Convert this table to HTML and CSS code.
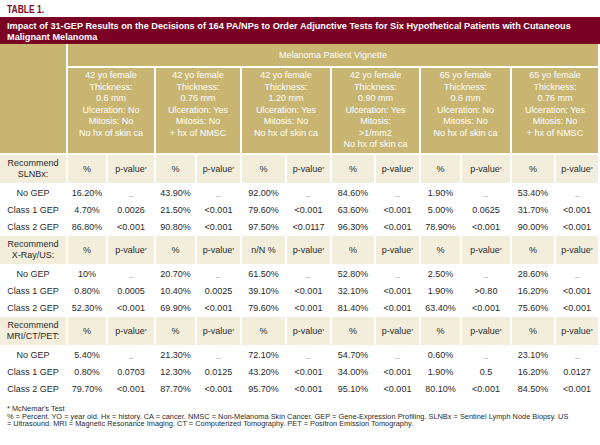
FILE: index.html
```html
<!DOCTYPE html>
<html>
<head>
<meta charset="utf-8">
<link rel="stylesheet" href="styles.css">
</head>
<body>
<div class="page">
  <div class="label"><span class="label-text">TABLE 1.</span></div>
  <div class="caption">Impact of 31-GEP Results on the Decisions of 164 PA/NPs to Order Adjunctive Tests for Six Hypothetical Patients with Cutaneous<br>Malignant Melanoma</div>
  <div class="grid">
    <div class="tan corner"></div>
    <div class="tan vignette">Melanoma Patient Vignette</div>
    <div class="tan case">42 yo female<br>Thickness:<br>0.6 mm<br>Ulceration: No<br>Mitosis: No<br>No hx of skin ca</div>
    <div class="tan case">42 yo female<br>Thickness:<br>0.76 mm<br>Ulceration: Yes<br>Mitosis: No<br>+ hx of NMSC</div>
    <div class="tan case">42 yo female<br>Thickness:<br>1.20 mm<br>Ulceration: Yes<br>Mitosis: No<br>No hx of skin ca</div>
    <div class="tan case">42 yo female<br>Thickness:<br>0.90 mm<br>Ulceration: Yes<br>Mitosis:<br>&gt;1/mm2<br>No hx of skin ca</div>
    <div class="tan case">65 yo female<br>Thickness:<br>0.6 mm<br>Ulceration: No<br>Mitosis: No<br>No hx of skin ca</div>
    <div class="tan case">65 yo female<br>Thickness:<br>0.76 mm<br>Ulceration: Yes<br>Mitosis: No<br>+ hx of NMSC</div>

    <div class="hd">Recommend<br>SLNBx:</div>
    <div class="hd">%</div><div class="hd">p-value<sup>*</sup></div>
    <div class="hd">%</div><div class="hd">p-value<sup>*</sup></div>
    <div class="hd">%</div><div class="hd">p-value<sup>*</sup></div>
    <div class="hd">%</div><div class="hd">p-value<sup>*</sup></div>
    <div class="hd">%</div><div class="hd">p-value<sup>*</sup></div>
    <div class="hd">%</div><div class="hd">p-value<sup>*</sup></div>

    <div class="dt">No GEP</div><div class="dt">16.20%</div><div class="dt dash">_</div><div class="dt">43.90%</div><div class="dt dash">_</div><div class="dt">92.00%</div><div class="dt dash">_</div><div class="dt">84.60%</div><div class="dt dash">_</div><div class="dt">1.90%</div><div class="dt dash">_</div><div class="dt">53.40%</div><div class="dt dash">_</div>
    <div class="dt">Class 1 GEP</div><div class="dt">4.70%</div><div class="dt">0.0026</div><div class="dt">21.50%</div><div class="dt">&lt;0.001</div><div class="dt">79.60%</div><div class="dt">&lt;0.001</div><div class="dt">63.60%</div><div class="dt">&lt;0.001</div><div class="dt">5.00%</div><div class="dt">0.0625</div><div class="dt">31.70%</div><div class="dt">&lt;0.001</div>
    <div class="dt">Class 2 GEP</div><div class="dt">86.80%</div><div class="dt">&lt;0.001</div><div class="dt">90.80%</div><div class="dt">&lt;0.001</div><div class="dt">97.50%</div><div class="dt">&lt;0.0117</div><div class="dt">96.30%</div><div class="dt">&lt;0.001</div><div class="dt">78.90%</div><div class="dt">&lt;0.001</div><div class="dt">90.00%</div><div class="dt">&lt;0.001</div>

    <div class="hd">Recommend<br>X-Ray/US:</div>
    <div class="hd">%</div><div class="hd">p-value<sup>*</sup></div>
    <div class="hd">%</div><div class="hd">p-value<sup>*</sup></div>
    <div class="hd">n/N %</div><div class="hd">p-value<sup>*</sup></div>
    <div class="hd">%</div><div class="hd">p-value<sup>*</sup></div>
    <div class="hd">%</div><div class="hd">p-value<sup>*</sup></div>
    <div class="hd">%</div><div class="hd">p-value<sup>*</sup></div>

    <div class="dt">No GEP</div><div class="dt">10%</div><div class="dt dash">_</div><div class="dt">20.70%</div><div class="dt dash">_</div><div class="dt">61.50%</div><div class="dt dash">_</div><div class="dt">52.80%</div><div class="dt dash">_</div><div class="dt">2.50%</div><div class="dt dash">_</div><div class="dt">28.60%</div><div class="dt dash">_</div>
    <div class="dt">Class 1 GEP</div><div class="dt">0.80%</div><div class="dt">0.0005</div><div class="dt">10.40%</div><div class="dt">0.0025</div><div class="dt">39.10%</div><div class="dt">&lt;0.001</div><div class="dt">32.10%</div><div class="dt">&lt;0.001</div><div class="dt">1.90%</div><div class="dt">&gt;0.80</div><div class="dt">16.20%</div><div class="dt">&lt;0.001</div>
    <div class="dt">Class 2 GEP</div><div class="dt">52.30%</div><div class="dt">&lt;0.001</div><div class="dt">69.90%</div><div class="dt">&lt;0.001</div><div class="dt">79.60%</div><div class="dt">&lt;0.001</div><div class="dt">81.40%</div><div class="dt">&lt;0.001</div><div class="dt">63.40%</div><div class="dt">&lt;0.001</div><div class="dt">75.60%</div><div class="dt">&lt;0.001</div>

    <div class="hd">Recommend<br>MRI/CT/PET:</div>
    <div class="hd">%</div><div class="hd">p-value<sup>*</sup></div>
    <div class="hd">%</div><div class="hd">p-value<sup>*</sup></div>
    <div class="hd">%</div><div class="hd">p-value<sup>*</sup></div>
    <div class="hd">%</div><div class="hd">p-value<sup>*</sup></div>
    <div class="hd">%</div><div class="hd">p-value<sup>*</sup></div>
    <div class="hd">%</div><div class="hd">p-value<sup>*</sup></div>

    <div class="dt">No GEP</div><div class="dt">5.40%</div><div class="dt dash">_</div><div class="dt">21.30%</div><div class="dt dash">_</div><div class="dt">72.10%</div><div class="dt dash">_</div><div class="dt">54.70%</div><div class="dt dash">_</div><div class="dt">0.60%</div><div class="dt dash">_</div><div class="dt">23.10%</div><div class="dt dash">_</div>
    <div class="dt">Class 1 GEP</div><div class="dt">0.80%</div><div class="dt">0.0703</div><div class="dt">12.30%</div><div class="dt">0.0125</div><div class="dt">43.20%</div><div class="dt">&lt;0.001</div><div class="dt">34.00%</div><div class="dt">&lt;0.001</div><div class="dt">1.90%</div><div class="dt">0.5</div><div class="dt">16.20%</div><div class="dt">0.0127</div>
    <div class="dt">Class 2 GEP</div><div class="dt">79.70%</div><div class="dt">&lt;0.001</div><div class="dt">87.70%</div><div class="dt">&lt;0.001</div><div class="dt">95.70%</div><div class="dt">&lt;0.001</div><div class="dt">95.10%</div><div class="dt">&lt;0.001</div><div class="dt">80.10%</div><div class="dt">&lt;0.001</div><div class="dt">84.50%</div><div class="dt">&lt;0.001</div>
  </div>
  <div class="notes">
    <div>* McNemar's Test</div>
    <div>% = Percent. YO = year old. Hx = history. CA = cancer. NMSC = Non-Melanoma Skin Cancer. GEP = Gene-Expression Profiling. SLNBx = Sentinel Lymph Node Biopsy. US</div>
    <div>= Ultrasound. MRI = Magnetic Resonance Imaging. CT = Computerized Tomography. PET = Positron Emission Tomography.</div>
  </div>
</div>
</body>
</html>
```

FILE: styles.css
```css
html, body {
  margin: 0;
  padding: 0;
  background: #ffffff;
}
.page {
  width: 600px;
  font-family: "Liberation Sans", Arial, sans-serif;
  color: #2a2a2a;
}
.label {
  height: 17px;
  padding-left: 7px;
  font-weight: bold;
  font-size: 11.5px;
  line-height: 18px;
  color: #7d0a2a;
}
.label-text {
  display: inline-block;
  transform: scaleX(0.74);
  transform-origin: left center;
}
.caption {
  background: #7a0024;
  color: #ffffff;
  font-weight: bold;
  font-size: 9.2px;
  line-height: 11px;
  height: 22px;
  padding: 4px 7px 1px 7px;
  white-space: nowrap;
}
.grid {
  display: grid;
  width: 598px;
  grid-template-columns: 66px 38px 46px 39px 43px 43px 43px 42px 43px 39px 48px 42px 42px;
  grid-template-rows: 22px 85px 28px 15px 15px 15px 28px 15px 15px 15px 28px 15px 15px 15px;
  gap: 2px;
  font-size: 9px;
}
.tan {
  background: #c8b572;
  color: #ffffff;
}
.corner {
  grid-row: 1 / span 2;
}
.vignette {
  grid-column: 2 / span 12;
  display: flex;
  align-items: center;
  justify-content: center;
}
.case {
  grid-column: span 2;
  text-align: center;
  line-height: 11.5px;
  padding-top: 2px;
}
.hd {
  background: #f3eedc;
  display: flex;
  align-items: center;
  justify-content: center;
  text-align: center;
  line-height: 11px;
}
.hd sup {
  font-size: 5px;
  vertical-align: 3px;
  line-height: 0;
}
.dt {
  display: flex;
  align-items: center;
  justify-content: center;
  white-space: nowrap;
}
.dash {
  color: #9a9a9a;
  font-size: 8px;
}
.notes {
  margin-top: 9px;
  padding-left: 7px;
  font-size: 7.4px;
  line-height: 7.5px;
  color: #2a2a2a;
  white-space: nowrap;
}
```
